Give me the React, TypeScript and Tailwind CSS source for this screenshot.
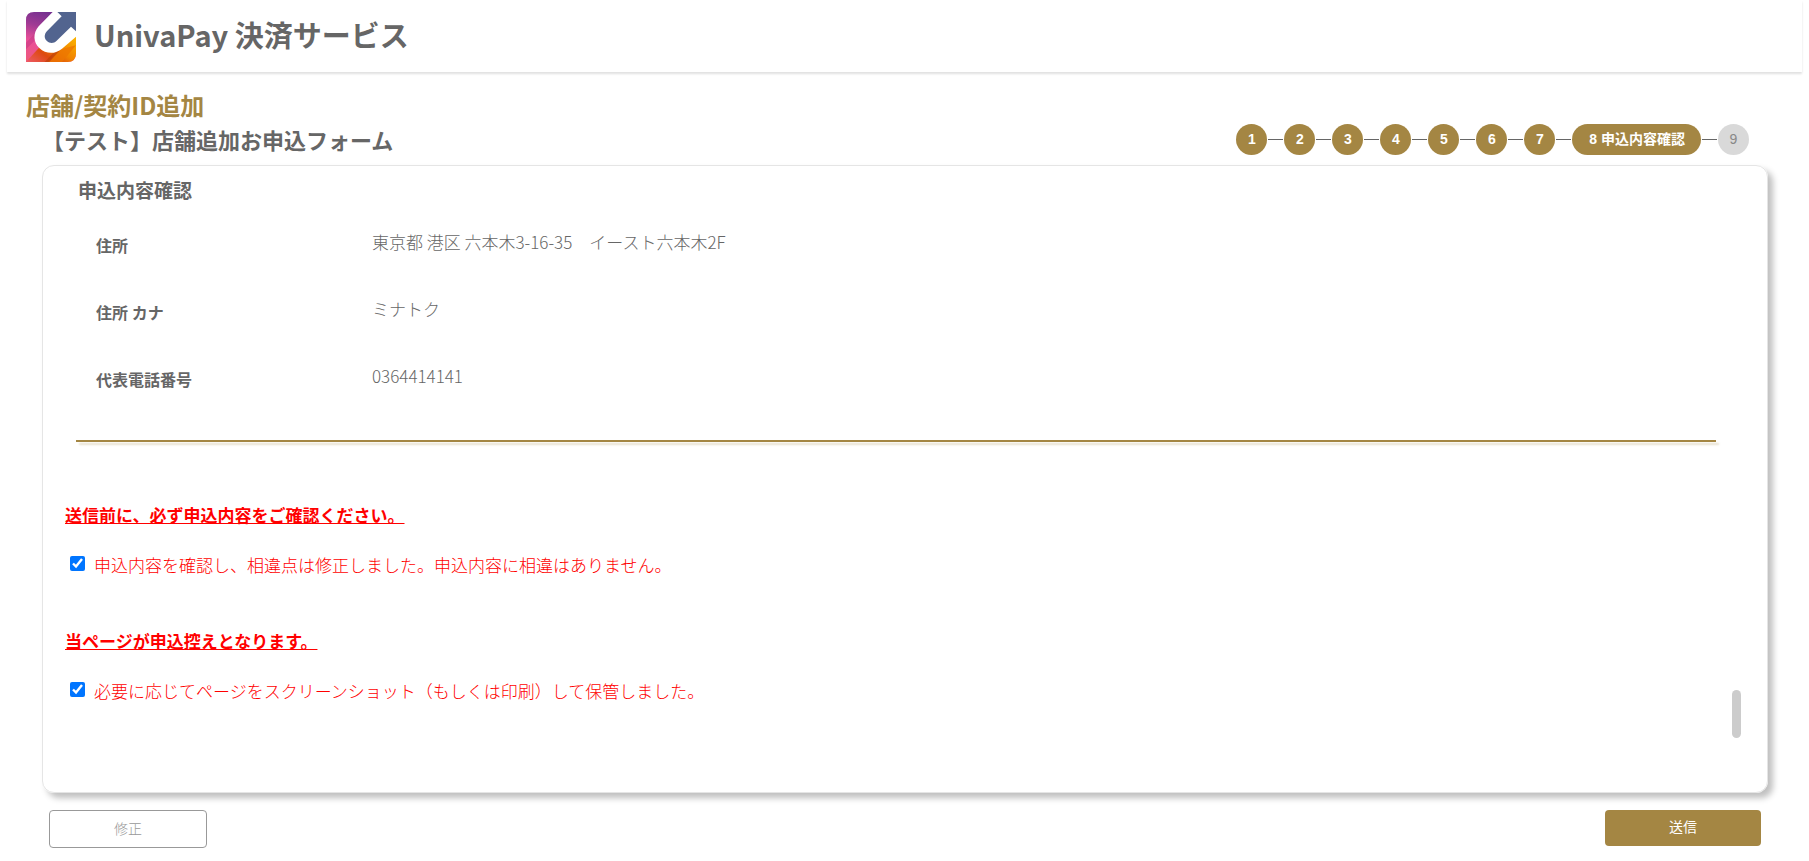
const steps = ["1", "2", "3", "4", "5", "6", "7"];

const rows = [
  { label: "住所", value: "東京都 港区 六本木3-16-35　イースト六本木2F" },
  { label: "住所 カナ", value: "ミナトク" },
  { label: "代表電話番号", value: "0364414141" },
];

const checks = [
  {
    id: "confirm",
    title: "送信前に、必ず申込内容をご確認ください。",
    text: "申込内容を確認し、相違点は修正しました。申込内容に相違はありません。",
  },
  {
    id: "keep",
    title: "当ページが申込控えとなります。",
    text: "必要に応じてページをスクリーンショット（もしくは印刷）して保管しました。",
  },
];

function Logo() {
  return (
    <svg className="size-[50px] shrink-0" viewBox="0 0 150 150" aria-hidden="true">
      <defs>
        <linearGradient id="left" x1="0.4" y1="0" x2="0.1" y2="1">
          <stop offset="0" stopColor="#74308f" />
          <stop offset="0.3" stopColor="#a03a94" />
          <stop offset="0.6" stopColor="#e94f98" />
          <stop offset="1" stopColor="#ee5a7c" />
        </linearGradient>
        <linearGradient id="right" x1="0" y1="1" x2="1" y2="0.2">
          <stop offset="0" stopColor="#ee5a6a" />
          <stop offset="0.35" stopColor="#dd4a10" />
          <stop offset="0.6" stopColor="#f08300" />
          <stop offset="1" stopColor="#fbb400" />
        </linearGradient>
        <clipPath id="frame">
          <path d="M24 0H150V124Q150 150 124 150H0V24Q0 0 24 0Z" />
        </clipPath>
      </defs>
      <g clipPath="url(#frame)">
        <rect width="150" height="150" fill="url(#left)" />
        <path d="M0 150L50 95L150 60V150Z" fill="url(#right)" />
        <path d="M0 92L36 54L30 82L0 112Z" fill="#c93a86" opacity="0.6" />
        <path d="M66 150L104 112L150 100L108 150Z" fill="#ee7700" opacity="0.8" />
        <path d="M70 150L108 108L84 121L56 150Z" fill="#b93c08" opacity="0.6" />
        <path d="M80 0L38 43C20 64 22 92 40 108C60 127 88 127 108 110L150 74V40L100 0Z" fill="#fff" />
        <path d="M94 0L107 13L64 56C54 66 54 78 62 86C71 95 83 95 92 86L135 44L150 58V0Z" fill="#52648f" />
      </g>
    </svg>
  );
}

function Stepper() {
  return (
    <ol className="flex items-center text-sm leading-5 font-bold text-white">
      {steps.map((step) => (
        <li key={step} className="flex items-center">
          <span className="flex size-[31px] items-center justify-center rounded-full bg-[#a48643] pb-0.5">{step}</span>
          <span className="mx-px h-px w-[15px] bg-[#666]" />
        </li>
      ))}
      <li className="flex items-center" aria-current="step">
        <span className="flex h-[31px] items-center justify-center rounded-full bg-[#a48643] pr-4 pb-0.5 pl-[17px]">
          8 申込内容確認
        </span>
        <span className="mx-px h-px w-[15px] bg-[#666]" />
      </li>
      <li className="flex size-[31px] items-center justify-center rounded-full bg-[#d9d9d9] pb-0.5 font-normal text-[#888]">
        9
      </li>
    </ol>
  );
}

export default function App() {
  return (
    <div className="bg-white font-['Noto_Sans_CJK_JP',sans-serif] text-[#666]" lang="ja">
      <header className="mx-[7px] flex h-[72px] items-center gap-[18px] px-[19px] pt-0.5 shadow-[0_2px_2px_rgba(0,0,0,0.12)]">
        <Logo />
        <h1 className="pb-1.5 text-[29px] leading-9 font-bold">UnivaPay 決済サービス</h1>
      </header>

      <main className="pt-4 pr-[41px] pl-[42px]">
        <h2 className="-ml-4 pb-0.5 text-2xl leading-[34px] font-bold text-[#a48643]">店舗/契約ID追加</h2>
        <div className="flex h-[41px] items-start justify-between pr-[19px]">
          <h3 className="text-[22px] leading-[30px] font-bold">【テスト】店舗追加お申込フォーム</h3>
          <div className="font-['Liberation_Sans','Noto_Sans_CJK_JP',sans-serif]">
            <Stepper />
          </div>
        </div>

        <section className="flex items-end justify-between rounded-xl border border-[#e5e5e5] pr-[26px] pb-[54px] shadow-[5px_5px_6px_rgba(0,0,0,0.25)]">
          <div className="flex-1">
            <h4 className="px-[35px] pt-2 text-[19px] leading-8 font-bold">申込内容確認</h4>
            <dl className="px-[53px] pt-6 pb-[9px]">
              {rows.map((row) => (
                <div key={row.label} className="flex h-[67px]">
                  <dt className="w-[276px] pt-[3px] text-[16px] leading-6 font-bold">{row.label}</dt>
                  <dd className="text-[17px] leading-6 font-light">{row.value}</dd>
                </div>
              ))}
            </dl>
            <hr className="mr-4 ml-[33px] border-t-2 border-[#a48643] shadow-[3px_3px_2px_rgba(164,134,67,0.25)]" />
            <div className="flex flex-col gap-[52px] px-[22px] pt-[61px] pb-[35px] text-[17px] leading-6 text-[red]">
              {checks.map((check) => (
                <div key={check.id}>
                  <p className="font-bold underline">{check.title}</p>
                  <div className="flex items-start gap-[9px] pt-[26px] pl-[5px]">
                    <input id={check.id} type="checkbox" defaultChecked className="mt-[3px] size-[15px] accent-[#0075ff]" />
                    <label htmlFor={check.id} className="font-light">
                      {check.text}
                    </label>
                  </div>
                </div>
              ))}
            </div>
          </div>
          <div className="h-12 w-[9px] rounded-full bg-[#ccc]" />
        </section>

        <div className="flex items-start justify-between px-[7px] pt-[17px] pb-3 text-sm leading-5">
          <button type="button" className="h-[38px] w-[158px] rounded border border-[#999] pb-0.5 font-light text-[#999]">
            修正
          </button>
          <button type="button" className="h-9 w-[156px] rounded bg-[#a48643] pb-1 text-white">
            送信
          </button>
        </div>
      </main>
    </div>
  );
}
